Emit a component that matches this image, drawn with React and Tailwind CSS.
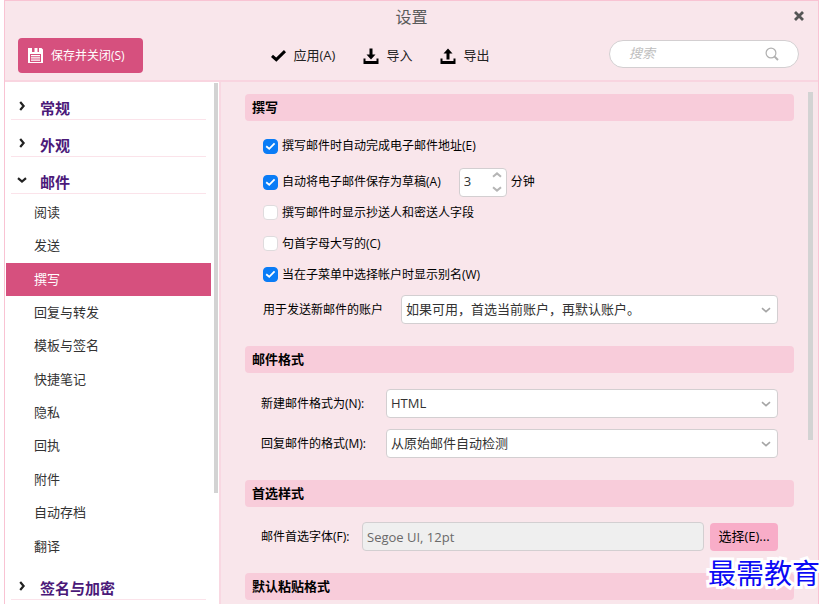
import React, { useState } from "react";

const generalSections = ["常规", "外观"];

const mailItems = [
  "阅读",
  "发送",
  "撰写",
  "回复与转发",
  "模板与签名",
  "快捷笔记",
  "隐私",
  "回执",
  "附件",
  "自动存档",
  "翻译",
];

const Chevron = ({ className, width = 2 }) => (
  <svg viewBox="0 0 10 10" fill="none" stroke="currentColor" strokeWidth={width} className={className} aria-hidden="true">
    <path d="M1 3.200 L5 6.600 L9 3.200" />
  </svg>
);

const SaveIcon = () => (
  <svg viewBox="0 0 15 15" className="size-[15px]" fill="currentColor" aria-hidden="true">
    <path fillRule="evenodd" d="M0 0h4v4h7V0h2.500L15 1.500V15H0zM2 6v8h11V6z" />
    <path d="M6.500 0h3v4h-3zM3 7h9v1.200H3zM3 9.200h9v1.200H3zM3 11.400h9v1.400H3z" />
  </svg>
);

const CheckIcon = () => (
  <svg viewBox="0 0 15 12" className="h-3 w-[15px]" fill="none" stroke="currentColor" strokeWidth="3" aria-hidden="true">
    <path d="M1 5.800 L5.300 9.600 L14 1.200" />
  </svg>
);

const TransferIcon = ({ up }) => (
  <svg viewBox="0 0 16 16" className="size-4" fill="currentColor" aria-hidden="true">
    <path d="M0.500 10.500h2v2.500h11v-2.500h2V16h-15z" />
    {up ? (
      <path d="M8 0.500l4.500 5H9.500v6h-3v-6h-3z" />
    ) : (
      <path d="M6.500 0.500h3v6h3L8 11.500l-4.500-5h3z" />
    )}
  </svg>
);

function SectionLink({ label, open }) {
  return (
    <a
      href="#"
      className="ml-[6px] mr-[8px] flex h-[37px] items-end border-b border-[#fbe3ea] pb-px pl-[6px] text-[15px] leading-5 font-bold text-[#4b1979]"
    >
      <Chevron
        width={2.2}
        className={open ? "mb-[7px] size-[10px] text-[#222]" : "mb-[7px] size-[10px] -rotate-90 text-[#222]"}
      />
      <span className="ml-[13px]">{label}</span>
    </a>
  );
}

function GroupTitle({ children }) {
  return (
    <h2 className="mr-[14px] flex h-[27px] items-center rounded bg-[#f8ccda] px-[7px] pt-px text-[13px] font-bold text-black">
      {children}
    </h2>
  );
}

function CheckRow({ label, checked }) {
  const [on, setOn] = useState(checked);
  return (
    <label className="flex items-center gap-1">
      <span className="grid">
        <input
          type="checkbox"
          checked={on}
          onChange={() => setOn(!on)}
          className="peer col-start-1 row-start-1 size-[15px] appearance-none rounded-[4px] border border-[#dfdbdd] bg-white checked:border-[#0a7cf6] checked:bg-[#0a7cf6]"
        />
        <svg
          viewBox="0 0 15 15"
          fill="none"
          stroke="currentColor"
          strokeWidth="1.8"
          className="pointer-events-none invisible col-start-1 row-start-1 size-[15px] text-white peer-checked:visible"
          aria-hidden="true"
        >
          <path d="M3.200 7.300 L6.200 9.800 L11.600 4.400" />
        </svg>
      </span>
      {label}
    </label>
  );
}

function SelectBox({ id, value }) {
  return (
    <div className="grid flex-1 items-center">
      <select
        id={id}
        className="col-start-1 row-start-1 h-[29px] w-full appearance-none rounded border border-[#d3cfd1] bg-white px-1 text-[13px] text-[#333]"
      >
        <option>{value}</option>
      </select>
      <Chevron
        width={1.6}
        className="pointer-events-none col-start-1 row-start-1 mr-[7px] size-[10px] justify-self-end text-[#a5a5a5]"
      />
    </div>
  );
}

function Sidebar() {
  return (
    <aside className="flex w-[216px] shrink-0 items-start border-r-2 border-[#f9d8e2] bg-white">
      <nav className="min-w-0 flex-1 pt-px">
        {generalSections.map((name) => (
          <SectionLink key={name} label={name} />
        ))}
        <SectionLink label="邮件" open />
        <ul className="mt-[2px] flex h-[367px] flex-col text-[13px] text-[#333]">
          {mailItems.map((name) => (
            <li key={name} className="flex flex-1">
              <a
                href="#"
                className={
                  name === "撰写"
                    ? "ml-px mr-[3px] flex flex-1 items-center bg-[#d6507e] pl-7 text-white"
                    : "ml-px mr-[3px] flex flex-1 items-center pl-7"
                }
              >
                {name}
              </a>
            </li>
          ))}
        </ul>
        <SectionLink label="签名与加密" />
      </nav>
      <div className="mr-px mt-px h-[410px] w-1 bg-[#d3d3d3]" />
    </aside>
  );
}

function Header() {
  return (
    <header className="shrink-0 border-b-2 border-[#f9d5e0]">
      <div className="grid h-[37px] grid-cols-[1fr_auto_1fr] items-start px-[14px]">
        <h1 className="col-start-2 pt-1 text-base text-[#5a5a5a]">设置</h1>
        <button type="button" aria-label="关闭" className="mt-[10px] justify-self-end text-[#555]">
          <svg viewBox="0 0 10 10" className="size-[10px]" fill="none" stroke="currentColor" strokeWidth="2.800" aria-hidden="true">
            <path d="M1 1 L9 9 M9 1 L1 9" />
          </svg>
        </button>
      </div>
      <div className="flex h-[42px] items-start pl-[13px] pr-[19px] text-[13px]">
        <button type="button" className="flex h-[35px] w-[125px] items-center gap-2 rounded bg-[#d6507e] pl-[10px] text-white">
          <SaveIcon />
          <span className="text-xs">保存并关闭(S)</span>
        </button>
        <div className="flex h-[35px] flex-1 items-center justify-center gap-7 pl-2 text-[#222]">
          <button type="button" className="flex items-center gap-2">
            <span className="text-black"><CheckIcon /></span>
            应用(A)
          </button>
          <button type="button" className="flex items-center gap-[7px]">
            <span className="text-black"><TransferIcon /></span>
            导入
          </button>
          <button type="button" className="flex items-center gap-[7px]">
            <span className="text-black"><TransferIcon up /></span>
            导出
          </button>
        </div>
        <label className="mt-[2px] flex h-7 w-[190px] items-center rounded-full border border-[#d3cfd1] bg-white pl-[19px] pr-[19px]">
          <input
            type="search"
            aria-label="搜索"
            placeholder="搜索"
            className="min-w-0 flex-1 bg-transparent text-[13px] italic outline-none placeholder:text-[#bdbdbd]"
          />
          <svg viewBox="0 0 14 14" className="size-[14px] text-[#b0b0b0]" fill="none" stroke="currentColor" aria-hidden="true">
            <circle cx="6" cy="6" r="4.900" strokeWidth="1.200" />
            <path d="M9.600 9.600 L13 13" strokeWidth="2" />
          </svg>
        </label>
      </div>
    </header>
  );
}

function ComposeSettings() {
  const [minutes, setMinutes] = useState(3);
  return (
    <main className="min-w-0 flex-1 overflow-hidden pl-6 pt-3 text-xs text-black">
      <GroupTitle>撰写</GroupTitle>
      <div className="mb-[22px] mt-[10px] pl-[18px] pr-[30px]">
        <div className="mb-[6px] flex h-[30px] items-center">
          <CheckRow label="撰写邮件时自动完成电子邮件地址(E)" checked />
        </div>
        <div className="flex h-[30px] items-center">
          <CheckRow label="自动将电子邮件保存为草稿(A)" checked />
          <div className="ml-[18px] mr-1 flex h-[29px] w-12 items-center rounded border border-[#d3cfd1] bg-white pl-1 pr-1">
            <input
              aria-label="分钟"
              inputMode="numeric"
              value={minutes}
              onChange={(e) => setMinutes(Number(e.target.value) || 0)}
              className="w-6 min-w-0 flex-1 text-[13px] text-[#333] outline-none"
            />
            <div className="flex flex-col gap-1 text-[#b5b5b5]">
              <button type="button" aria-label="增加" onClick={() => setMinutes(minutes + 1)}>
                <Chevron className="size-[10px] rotate-180" />
              </button>
              <button type="button" aria-label="减少" onClick={() => setMinutes(minutes - 1)}>
                <Chevron className="size-[10px]" />
              </button>
            </div>
          </div>
          分钟
        </div>
        <div className="flex h-[31px] items-center">
          <CheckRow label="撰写邮件时显示抄送人和密送人字段" checked={false} />
        </div>
        <div className="flex h-[31px] items-center">
          <CheckRow label="句首字母大写的(C)" checked={false} />
        </div>
        <div className="flex h-[31px] items-center">
          <CheckRow label="当在子菜单中选择帐户时显示别名(W)" checked />
        </div>
        <div className="mt-[5px] flex items-center">
          <label htmlFor="account" className="w-[138px]">用于发送新邮件的账户</label>
          <SelectBox id="account" value="如果可用，首选当前账户，再默认账户。" />
        </div>
      </div>

      <GroupTitle>邮件格式</GroupTitle>
      <div className="mb-[22px] mt-4 flex flex-col gap-[11px] pl-4 pr-[30px]">
        <div className="flex items-center">
          <label htmlFor="new-format" className="w-[125px]">新建邮件格式为(N):</label>
          <SelectBox id="new-format" value="HTML" />
        </div>
        <div className="flex items-center">
          <label htmlFor="reply-format" className="w-[125px]">回复邮件的格式(M):</label>
          <SelectBox id="reply-format" value="从原始邮件自动检测" />
        </div>
      </div>

      <GroupTitle>首选样式</GroupTitle>
      <div className="mb-[22px] mt-[15px] flex items-center pl-4 pr-[30px]">
        <label htmlFor="font" className="w-[101px]">邮件首选字体(F):</label>
        <input
          id="font"
          readOnly
          value="Segoe UI, 12pt"
          className="h-[29px] min-w-0 flex-1 rounded border border-[#d3cfd1] bg-[#efefef] px-1 text-[13px] text-[#6a6a6a]"
        />
        <button type="button" className="ml-[6px] h-7 w-[68px] rounded bg-[#f8adc8] text-[13px]">
          选择(E)...
        </button>
      </div>

      <GroupTitle>默认粘贴格式</GroupTitle>
    </main>
  );
}

export default function App() {
  return (
    <div className="relative flex h-screen overflow-hidden bg-white pl-1 pr-[9px] font-['Open_Sans','Noto_Sans_CJK_SC',sans-serif]">
      <div className="flex min-w-0 flex-1 flex-col border-x border-t border-[#f9c3d3] bg-[#f9e6eb]">
        <Header />
        <div className="flex min-h-0 flex-1">
          <Sidebar />
          <ComposeSettings />
          <div className="mr-[5px] mt-[10px] h-[348px] w-[5px] shrink-0 bg-[#d3d3d3]" />
        </div>
      </div>
      <div className="absolute bottom-[13px] right-2 text-[28px] leading-9 text-[#0a0af5] [-webkit-text-stroke:6px_white] [paint-order:stroke_fill]">
        最需教育
      </div>
    </div>
  );
}
